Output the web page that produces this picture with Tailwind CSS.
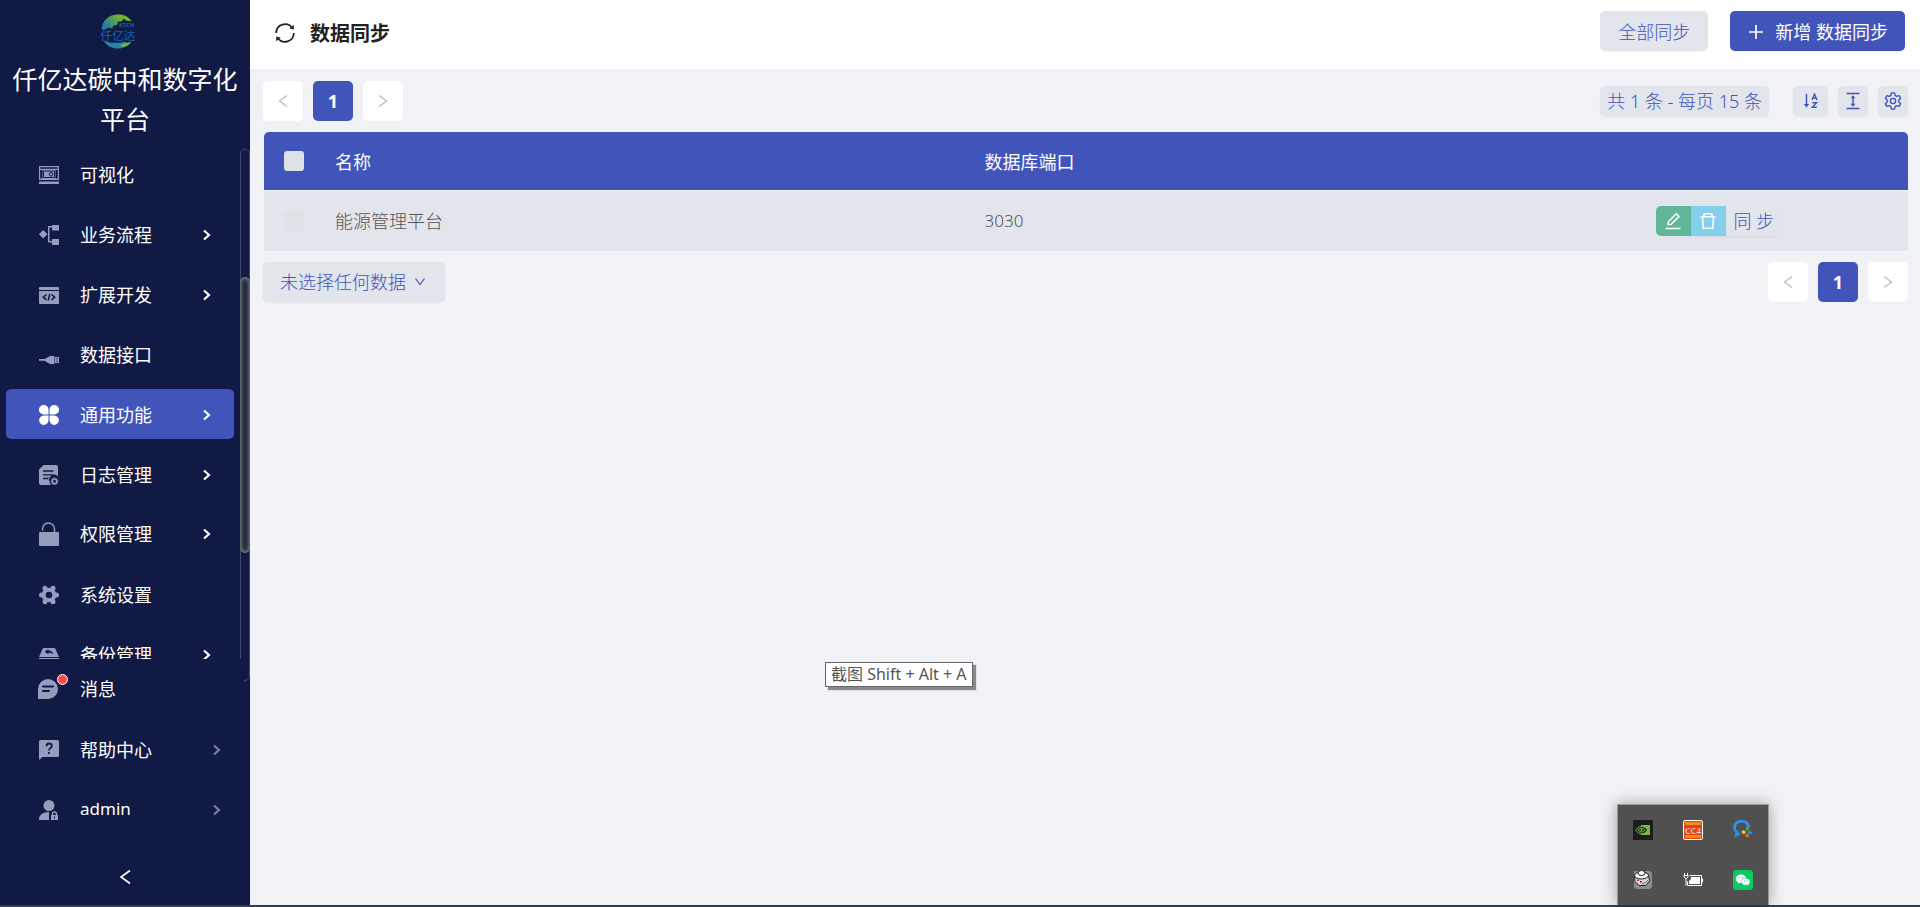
<!DOCTYPE html>
<html lang="zh-CN">
  <head>
    <meta charset="UTF-8" />
    <meta name="viewport" content="width=device-width, initial-scale=1.0" />
    <title>数据同步</title>
    <script src="https://cdn.jsdelivr.net/npm/@tailwindcss/browser@4"></script>
  </head>
  <body class="flex h-screen flex-col overflow-hidden bg-[#f0f2f6] font-['Noto_Sans','Noto_Sans_CJK_SC',sans-serif] text-lg">
    <div class="flex min-h-0 flex-1">
      <!-- sidebar -->
      <aside class="flex w-[250px] shrink-0 flex-col bg-[#111a44] text-white">
        <div class="flex flex-col items-center pt-3.5 pb-1">
          <svg viewBox="0 0 36 36" class="mr-3.5 h-[35px] w-9" role="img" aria-label="仟亿达">
            <defs>
              <linearGradient id="ring" x1="0" y1="0.6" x2="1" y2="0.2">
                <stop offset="0" stop-color="#1f7aa5" />
                <stop offset="0.6" stop-color="#6aae35" />
                <stop offset="1" stop-color="#7dbb2a" />
              </linearGradient>
            </defs>
            <path d="M1 16C2 6 9 .5 18 .5c6-.3 11 2.500 14 7l-5-.5-3-2-2 2.500-4 .5-1 3-4 1-1 3-4-1-3 2Z" fill="url(#ring)" />
            <path d="M3 27c4 2 10 3 16 2.500l6-1 3 1 4-1c-3 4-8 7-14 7-7 0-12-3-15-8.500Z" fill="#2583a6" />
            <path d="M20 32l6-2 5-1c-2 3-4 4-8 5Z" fill="#7dbb2a" />
            <text x="19" y="13" font-size="6" font-weight="700" fill="#1a5ea8">KTCN</text>
            <text x="0" y="27" font-size="12" font-weight="500" fill="#1558a6">仟亿达</text>
          </svg>
          <h1 class="mt-2.5 px-2 text-center text-[25px] leading-10">仟亿达碳中和数字化平台</h1>
        </div>

        <div class="relative mt-1.5 min-h-0 flex-1">
          <nav class="h-full space-y-2.5 overflow-hidden pr-4 pl-1.5">
            <a href="#" class="flex h-[50px] items-center rounded-[5px] pt-px pr-[22px] pl-[33px]">
              <svg viewBox="0 0 20 20" class="mr-[21px] h-5 w-5 text-[#959cbd]" fill="currentColor">
                <path fill-rule="evenodd" d="M0 1h20v14H0ZM1.200 2.200v1.600h17.600V2.200ZM1.200 5v8.500h2.300V5ZM16.500 5v8.500h2.300V5Z" />
                <path d="M4.500 6h11v6.500h-11Z" stroke="#111a44" />
                <circle cx="12" cy="9.300" r="1.800" fill="none" stroke="#111a44" />
                <path d="M0 16.500h20V19H0Z" />
              </svg>
              <span class="flex-1">可视化</span>
            </a>
            <a href="#" class="flex h-[50px] items-center rounded-[5px] pt-px pr-[22px] pl-[33px]">
              <svg viewBox="0 0 20 20" class="mr-[21px] h-5 w-5 text-[#959cbd]" fill="currentColor">
                <path d="M4.200 5 8.500 9.300l-4.300 4.200L0 9.300Z" />
                <path d="M9 1h4V0h7v5.500h-7V2.500h-2.500v13.500H13V14h7v6h-7v-2.500H9Z" />
              </svg>
              <span class="flex-1">业务流程</span>
              <svg viewBox="0 0 10 12" class="h-3 w-2.5" fill="none" stroke="currentColor" stroke-width="2.200"><path d="m2 1.500 5 4.500-5 4.500" /></svg>
            </a>
            <a href="#" class="flex h-[50px] items-center rounded-[5px] pt-px pr-[22px] pl-[33px]">
              <svg viewBox="0 0 20 20" class="mr-[21px] h-5 w-5 text-[#959cbd]" fill="currentColor">
                <path d="M1 2h18q1 0 1 1v2H0V3q0-1 1-1Z" />
                <path d="M0 6h20v12q0 1-1 1H1q-1 0-1-1Z" />
                <path d="M7.500 9.500 4.200 12.200l3.300 2.700M12.500 9.500l3.300 2.700-3.300 2.700M10.800 9l-1.600 6.500" fill="none" stroke="#111a44" stroke-width="1.500" />
              </svg>
              <span class="flex-1">扩展开发</span>
              <svg viewBox="0 0 10 12" class="h-3 w-2.5" fill="none" stroke="currentColor" stroke-width="2.200"><path d="m2 1.500 5 4.500-5 4.500" /></svg>
            </a>
            <a href="#" class="flex h-[50px] items-center rounded-[5px] pt-px pr-[22px] pl-[33px]">
              <svg viewBox="0 0 20 20" class="mr-[21px] h-5 w-5 text-[#959cbd]" fill="currentColor">
                <path d="M0 14h5.500l3-1.500 2.500-1.500h4.500v8H11l-2.500-1.500-3-1.700H0Z" />
                <path fill-rule="evenodd" d="M16 12h4v6h-4ZM17.200 13v1.200h1.300V13ZM17.200 15.800V17h1.300v-1.200Z" />
              </svg>
              <span class="flex-1">数据接口</span>
            </a>
            <a href="#" aria-current="page" class="flex h-[50px] items-center rounded-[5px] bg-[#4154b9] pt-px pr-[22px] pl-[33px]">
              <svg viewBox="0 0 20 20" class="mr-[21px] h-5 w-5" fill="currentColor">
                <path d="M4.700 0a4.700 4.700 0 0 1 4.800 4.700v4.800H4.700a4.700 4.700 0 0 1 0-9.500ZM15.300 0a4.700 4.700 0 0 1 0 9.500h-4.800V4.700A4.700 4.700 0 0 1 15.300 0ZM4.700 10.500h4.800v4.800a4.700 4.700 0 1 1-4.800-4.800ZM10.500 10.500h4.800a4.700 4.700 0 1 1-4.800 4.800Z" />
              </svg>
              <span class="flex-1">通用功能</span>
              <svg viewBox="0 0 10 12" class="h-3 w-2.5" fill="none" stroke="currentColor" stroke-width="2.200"><path d="m2 1.500 5 4.500-5 4.500" /></svg>
            </a>
            <a href="#" class="flex h-[50px] items-center rounded-[5px] pt-px pr-[22px] pl-[33px]">
              <svg viewBox="0 0 20 20" class="mr-[21px] h-5 w-5 text-[#959cbd]" fill="currentColor">
                <path d="M4.500 0H17q2 0 2 2v9.500a5 5 0 0 0-8.500 5 5 5 0 0 0 1.500 3.500H2q-2 0-2-2V4.500Z" />
                <path d="M4 6h10.500M4 9.800h10.500M4 13.500h5.500" stroke="#111a44" stroke-width="1.300" />
                <circle cx="15.500" cy="16.300" r="2.300" fill="none" stroke="currentColor" stroke-width="1.600" />
                <path d="M15.500 12.300v1.500M15.500 18.800v1.200M11.800 16.300h1.200M18 16.300h1.500M12.800 13.600l1 1M17.200 18l1 1M18.200 13.600l-1 1M13.800 18l-1 1" stroke="currentColor" stroke-width="1.300" />
              </svg>
              <span class="flex-1">日志管理</span>
              <svg viewBox="0 0 10 12" class="h-3 w-2.5" fill="none" stroke="currentColor" stroke-width="2.200"><path d="m2 1.500 5 4.500-5 4.500" /></svg>
            </a>
            <a href="#" class="flex h-[50px] items-center rounded-[5px] pr-[22px] pl-[33px]">
              <svg viewBox="0 0 20 24" class="mr-[21px] h-6 w-5 text-[#959cbd]" fill="currentColor">
                <rect y="10" width="20" height="14" rx="1" />
                <path d="M3.500 8.500V7a6 6 0 0 1 12 0v3" fill="none" stroke="currentColor" stroke-width="1.500" />
              </svg>
              <span class="flex-1">权限管理</span>
              <svg viewBox="0 0 10 12" class="h-3 w-2.5" fill="none" stroke="currentColor" stroke-width="2.200"><path d="m2 1.500 5 4.500-5 4.500" /></svg>
            </a>
            <a href="#" class="flex h-[50px] items-center rounded-[5px] pt-px pr-[22px] pl-[33px]">
              <svg viewBox="0 0 20 20" class="mr-[21px] h-5 w-5 text-[#959cbd]" fill="currentColor">
                <circle cx="10" cy="10" r="5.300" fill="none" stroke="currentColor" stroke-width="4" />
                <circle cx="2.500" cy="10" r="2.500" />
                <circle cx="17.500" cy="10" r="2.500" />
                <circle cx="6" cy="3.200" r="2.500" />
                <circle cx="14" cy="3.200" r="2.500" />
                <circle cx="6" cy="16.800" r="2.500" />
                <circle cx="14" cy="16.800" r="2.500" />
              </svg>
              <span class="flex-1">系统设置</span>
            </a>
            <a href="#" class="flex h-[50px] items-center rounded-[5px] pt-px pr-[22px] pl-[33px]">
              <svg viewBox="0 0 20 20" class="mr-[21px] h-5 w-5 text-[#959cbd]" fill="currentColor">
                <path d="M5 3h10q1 0 1.500 1L20 12H0l3.500-8Q4 3 5 3ZM0 13h20v5H0Z" />
                <path d="m9.500 4-4 2.800 4 2.500V7.700q3-.2 4.800 1.800-.8-4-4.800-4Z" fill="#111a44" />
              </svg>
              <span class="flex-1">备份管理</span>
              <svg viewBox="0 0 10 12" class="h-3 w-2.5" fill="none" stroke="currentColor" stroke-width="2.200"><path d="m2 1.500 5 4.500-5 4.500" /></svg>
            </a>
          </nav>
          <!-- scroll track, runs on behind the bottom menu -->
          <div class="absolute top-0 right-0 -bottom-[22px] w-2.5 rounded-[5px] border border-[#41486b]">
            <div class="absolute -inset-x-px top-[24%] h-[52%] rounded-[5px] bg-[#1e2538] shadow-[inset_0_0_4px_1px_#8f9098]"></div>
          </div>
        </div>

        <div class="relative pb-1">
          <div class="absolute inset-y-0 left-0 w-[244px] bg-[#111a44]"></div>
          <nav class="relative space-y-2.5 pt-[5px] pr-1.5 pl-1.5">
            <a href="#" class="flex h-[50px] items-center pr-[22px] pl-8">
              <span class="relative mr-[22px] h-5 w-5">
                <svg viewBox="0 0 20 20" class="h-5 w-5 text-[#959cbd]" fill="currentColor">
                  <path d="M10 0a10 10 0 0 1 0 20H0V10A10 10 0 0 1 10 0Z" />
                  <path d="M5 7.500h10M5 12h6" stroke="#111a44" stroke-width="2" stroke-linecap="round" />
                </svg>
                <span class="absolute -top-[5px] -right-2.5 h-[11px] w-[11px] rounded-full border border-white bg-[#ff4d4f]"></span>
              </span>
              <span class="flex-1">消息</span>
            </a>
            <a href="#" class="flex h-[50px] items-center pt-px pr-[22px] pl-[33px]">
              <svg viewBox="0 0 20 20" class="mr-[21px] h-5 w-5 text-[#959cbd]" fill="currentColor">
                <path d="M1.500 0h17Q20 0 20 1.500v14q0 1.500-1.500 1.500H3.500L0 20V1.500Q0 0 1.500 0Z" />
                <path d="M7.500 6.200q0-2.700 2.600-2.700 2.700 0 2.700 2.300 0 1.300-1.300 2.200Q10 9 10 10.500M10 12v2" fill="none" stroke="#111a44" stroke-width="1.800" />
              </svg>
              <span class="flex-1">帮助中心</span>
              <svg viewBox="0 0 10 12" class="h-3 w-2.5 text-[#7d829c]" fill="none" stroke="currentColor" stroke-width="2.200"><path d="m2 1.500 5 4.500-5 4.500" /></svg>
            </a>
            <a href="#" class="flex h-[50px] items-center pt-px pr-[22px] pl-[33px]">
              <svg viewBox="0 0 20 20" class="mr-[21px] h-5 w-5 text-[#959cbd]" fill="currentColor">
                <circle cx="10" cy="5.500" r="5.500" />
                <path d="M0 20q0-8 10-8v8ZM12 15h7v5h-7Z" />
                <path d="M13.500 15v-1a2 2 0 0 1 4 0v1" fill="none" stroke="currentColor" stroke-width="1.400" />
                <path d="M15.500 16.500v2" stroke="#111a44" />
              </svg>
              <span class="flex-1 text-[17px]">admin</span>
              <svg viewBox="0 0 10 12" class="h-3 w-2.5 text-[#7d829c]" fill="none" stroke="currentColor" stroke-width="2.200"><path d="m2 1.500 5 4.500-5 4.500" /></svg>
            </a>
          </nav>
          <button type="button" aria-label="收起菜单" class="relative mt-[19px] flex h-12 w-full items-center justify-center">
            <svg viewBox="0 0 12 16" class="h-4 w-3" fill="none" stroke="currentColor" stroke-width="1.600"><path d="M11 1.500 2 8l9 6.500" /></svg>
          </button>
        </div>
      </aside>

      <main class="min-w-0 flex-1">
        <header class="flex h-[69px] items-start bg-white pt-[11px] pr-[15px] pl-6">
          <div class="flex h-11 flex-1 items-center gap-3.5">
            <button type="button" aria-label="刷新">
              <svg viewBox="0 0 22 22" class="h-[22px] w-[22px] text-[#222]" fill="none" stroke="currentColor" stroke-width="1.700">
                <path d="M2.200 11a8.800 8.800 0 0 1 16-5M19.800 11a8.800 8.800 0 0 1-16 5" />
                <path d="m19.900 2.800-.2 4.700-4.400-1ZM2.100 19.200l.2-4.700 4.400 1Z" fill="currentColor" stroke="none" />
              </svg>
            </button>
            <h2 class="pt-0.5 text-xl font-bold text-[#222]">数据同步</h2>
          </div>
          <button type="button" class="h-10 rounded-[5px] bg-[#e2e5ec] px-[18px] pt-0.5 font-light text-[#4154b9] shadow-xs">全部同步</button>
          <button type="button" class="ml-[22px] flex h-10 items-center rounded-[5px] bg-[#4154b9] px-[17px] pt-0.5 text-white shadow-xs">
            <svg viewBox="0 0 18 18" class="mr-2.5 h-[18px] w-[18px]" stroke="currentColor" stroke-width="1.700"><path d="M9 2v14M2 9h14" /></svg>
            新增 数据同步
          </button>
        </header>

        <div class="pr-3 pl-[13px]">
          <div class="flex h-[63px] items-center justify-between">
            <div class="flex gap-2.5">
              <button type="button" aria-label="上一页" class="flex h-10 w-10 items-center justify-center rounded-[5px] bg-white text-[#bfbfbf]">
                <svg viewBox="0 0 10 14" class="h-3.5 w-2.5" fill="none" stroke="currentColor" stroke-width="1.500"><path d="M9 1.500 1.500 7 9 12.500" /></svg>
              </button>
              <button type="button" class="h-10 w-10 rounded-[5px] bg-[#4154b9] font-bold text-white">1</button>
              <button type="button" aria-label="下一页" class="flex h-10 w-10 items-center justify-center rounded-[5px] bg-white text-[#bfbfbf]">
                <svg viewBox="0 0 10 14" class="h-3.5 w-2.5" fill="none" stroke="currentColor" stroke-width="1.500"><path d="M1 1.500 8.500 7 1 12.500" /></svg>
              </button>
            </div>
            <div class="flex items-center gap-2.5 text-[#4154b9]">
              <button type="button" class="mr-3.5 h-[30px] rounded-[5px] bg-[#e2e5ec] px-[7px] font-light leading-[30px] shadow-xs">共 1 条 - 每页 15 条</button>
              <button type="button" aria-label="排序" class="flex h-[30px] w-[35px] items-center justify-center rounded-[5px] bg-[#e2e5ec] shadow-xs">
                <svg viewBox="0 0 16 16" class="h-4 w-4" fill="none" stroke="currentColor" stroke-width="1.400">
                  <path d="M3.500 1v12" />
                  <path d="M.8 11h5.400l-2.700 3.500Z" fill="currentColor" stroke="none" />
                  <path d="m9 7 2.500-6L14 7M9.800 5h3.400M9.300 9.700h4.200L9.300 14.300h4.500" />
                </svg>
              </button>
              <button type="button" aria-label="行高" class="flex h-[30px] w-[30px] items-center justify-center rounded-[5px] bg-[#e2e5ec] shadow-xs">
                <svg viewBox="0 0 16 18" class="h-[18px] w-4" fill="none" stroke="currentColor" stroke-width="1.400">
                  <path d="M1.500 1.500h13M1.500 16.500h13M8 4v10" />
                  <path d="m5.500 6.200 2.500-3 2.500 3ZM5.500 11.800l2.500 3 2.500-3Z" fill="currentColor" stroke="none" />
                </svg>
              </button>
              <button type="button" aria-label="设置" class="flex h-[30px] w-[30px] items-center justify-center rounded-[5px] bg-[#e2e5ec] shadow-xs">
                <svg viewBox="0 0 18 18" class="h-[18px] w-[18px]" fill="none" stroke="currentColor" stroke-width="1.400" stroke-linejoin="round">
                  <path d="M7.500.9h3l.6 2.500 1.600 1 2.400-.8 1.500 2.600-1.800 1.800v2l1.800 1.800-1.500 2.600-2.400-.8-1.600 1-.6 2.500h-3l-.6-2.500-1.600-1-2.400.8-1.500-2.600L3.200 10V8L1.400 6.200l1.500-2.600 2.400.8 1.600-1Z" />
                  <circle cx="9" cy="9" r="2.600" />
                </svg>
              </button>
            </div>
          </div>

          <div class="ml-px overflow-hidden rounded-t-[5px]">
            <table class="w-full table-fixed border-separate border-spacing-0 text-left">
              <colgroup>
                <col class="w-[61px]" />
                <col class="w-[40%]" />
                <col />
                <col class="w-[23%]" />
              </colgroup>
              <thead class="bg-[#4154b9] text-white">
                <tr class="h-[58px]">
                  <th class="pl-5">
                    <input type="checkbox" aria-label="全选" class="block h-5 w-5 appearance-none rounded-[3px] bg-[#dde2e6]" />
                  </th>
                  <th class="pt-px pl-2.5 font-normal">名称</th>
                  <th class="pt-px pl-0.5 font-normal">数据库端口</th>
                  <th></th>
                </tr>
              </thead>
              <tbody class="bg-[#e2e5ec] font-light text-[#555]">
                <tr class="h-[61px]">
                  <td class="border-t border-[#f5f6f9] pl-5">
                    <input type="checkbox" aria-label="选择 能源管理平台" class="block h-5 w-5 appearance-none rounded-[3px] bg-[#dde2e6]" />
                  </td>
                  <td class="border-t border-[#f5f6f9] pl-2.5">能源管理平台</td>
                  <td class="border-t border-[#f5f6f9] pl-0.5 text-[17px]">3030</td>
                  <td class="border-t border-[#f5f6f9]">
                    <div class="flex justify-center">
                      <button type="button" aria-label="编辑" class="flex h-[30px] w-[35px] items-center justify-center rounded-l-[5px] bg-[#60b698] text-white">
                        <svg viewBox="0 0 18 18" class="h-[18px] w-[18px]" fill="none" stroke="currentColor" stroke-width="1.500">
                          <path d="M1.500 16.500h15M4 12.700l.5-3.200 7.800-7.800 2.700 2.700-7.800 7.800Z" />
                        </svg>
                      </button>
                      <button type="button" aria-label="删除" class="flex h-[30px] w-[35px] items-center justify-center bg-[#84cfe9] text-white shadow-xs">
                        <svg viewBox="0 0 18 18" class="h-[18px] w-[18px]" fill="none" stroke="currentColor" stroke-width="1.500">
                          <path d="M1.500 4.700h15M5 4.500V1.700h8v2.800M3.500 5l.7 11.300h9.600L14.500 5" />
                        </svg>
                      </button>
                      <button type="button" class="h-[30px] rounded-r-[5px] px-2 leading-[30px] text-[#4154b9] shadow-xs">同 步</button>
                    </div>
                  </td>
                </tr>
              </tbody>
            </table>
          </div>

          <div class="mt-[11px] flex items-center justify-between">
            <div class="relative">
              <label for="bulk" class="sr-only">批量操作</label>
              <select id="bulk" class="h-10 w-[182px] appearance-none rounded-[5px] bg-[#e2e5ec] pl-[17px] font-light leading-10 text-[#4154b9] shadow-xs">
                <option>未选择任何数据</option>
              </select>
              <svg viewBox="0 0 12 10" class="pointer-events-none absolute top-[15px] right-[19px] h-2.5 w-3 text-[#4154b9]" fill="none" stroke="currentColor" stroke-width="1.200"><path d="m1.500 1.500 4.500 6 4.500-6" /></svg>
            </div>
            <div class="flex gap-2.5">
              <button type="button" aria-label="上一页" class="flex h-10 w-10 items-center justify-center rounded-[5px] bg-white text-[#bfbfbf]">
                <svg viewBox="0 0 10 14" class="h-3.5 w-2.5" fill="none" stroke="currentColor" stroke-width="1.500"><path d="M9 1.500 1.500 7 9 12.500" /></svg>
              </button>
              <button type="button" class="h-10 w-10 rounded-[5px] bg-[#4154b9] font-bold text-white">1</button>
              <button type="button" aria-label="下一页" class="flex h-10 w-10 items-center justify-center rounded-[5px] bg-white text-[#bfbfbf]">
                <svg viewBox="0 0 10 14" class="h-3.5 w-2.5" fill="none" stroke="currentColor" stroke-width="1.500"><path d="M1 1.500 8.500 7 1 12.500" /></svg>
              </button>
            </div>
          </div>
        </div>
      </main>
    </div>
    <div class="h-0.5 shrink-0 bg-[#344046]"></div>

    <!-- tooltip of the screenshot tool -->
    <div role="tooltip" class="absolute top-[662px] left-[825px] border border-[#666] bg-white px-[5px] text-base leading-[23px] text-[#555] shadow-[3px_3px_1px_#8a8a8e]">截图 Shift + Alt + A</div>

    <!-- system tray -->
    <div class="absolute right-[151px] bottom-0.5 grid h-[101px] w-[152px] grid-cols-[50px_50px_50px] content-start gap-y-[30px] border border-b-0 border-[#999] bg-[#505050] pt-[15px] shadow-[0_0_14px_rgba(0,0,0,0.35)]">
      <svg viewBox="0 0 20 20" class="mx-auto h-5 w-5">
        <path d="M0 0h20v20H0Z" fill="#1c1c1c" />
        <path d="M8 5h9v10H8Z" fill="#76b843" />
        <path d="M2.500 10Q6 5.500 10 6.500q3 .8 4.500 3.500-2 3.500-5.500 4-4 0-6.500-4Z" fill="#1c1c1c" stroke="#76b843" />
        <path d="M5 10q2.500-2.500 5-1.500l2 1.500q-1.500 2-3.500 2-2 0-3.500-2Z" fill="none" stroke="#76b843" />
        <circle cx="8.500" cy="10" r="1" fill="#76b843" />
      </svg>
      <svg viewBox="0 0 20 20" class="mx-auto h-5 w-5">
        <rect x=".5" y=".5" width="19" height="19" rx="1.500" fill="#e8400f" stroke="#fff" />
        <path d="M2 2h16v3H2ZM2 15h16v3H2Z" fill="#f58a1c" />
        <text x="10" y="13.500" text-anchor="middle" font-size="9" font-weight="700" fill="#fff" stroke="#b01818" stroke-width=".4">CC4</text>
      </svg>
      <svg viewBox="0 0 20 20" class="mx-auto h-5 w-5">
        <path d="M15.500 8A7 6.500 0 1 0 4 12.500L3.500 15l3-1.500" fill="none" stroke="#2f8df0" stroke-width="2.800" />
        <path d="m13.500 6 2.500 2-1 3-2.500-1Z" fill="#35b82a" />
        <path d="m20 12-2.500 2.500-3-1.500 1-2Z" fill="#2f8df0" />
        <path d="m14 18-2-2.500 2-2 2.500 2Z" fill="#f26b22" />
        <path d="m8 12 2.500-2 2.500 2-2 2.500Z" fill="#f8c81c" />
      </svg>
      <svg viewBox="0 0 20 20" class="mx-auto h-5 w-5">
        <path d="M1 1h16l2 2v14l-2 2H3l-2-2Z" fill="#8c8c90" />
        <path d="M1.500 5h14l1 6-4 4.500H6l-4-4Z" fill="#d7d7da" stroke="#222" />
        <ellipse cx="8.500" cy="5.500" rx="7" ry="3.500" fill="#eee" stroke="#222" />
        <ellipse cx="8.500" cy="3" rx="3.500" ry="2.500" fill="#fff" stroke="#222" />
        <path d="M4 9.500h2V11H4Z" fill="#d22" />
        <path d="M7 11h2v1.500H7Z" fill="#33c" />
        <path d="M9 14q4-1 6-4" fill="none" stroke="#666" />
      </svg>
      <svg viewBox="0 0 20 20" class="mx-auto h-5 w-5" fill="none" stroke="#fff">
        <path d="M6.500 5.500h12v10h-14v-4" />
        <path d="M8 7h9v7H6v-3l2-2ZM19 8.500h1v4h-1Z" fill="#fff" stroke="none" />
        <path d="M1 5.500h4v1.500L3 9 1 7Z" />
        <path d="M1.500 3v2M4.500 3v2M3 9v6.500" />
      </svg>
      <svg viewBox="0 0 20 20" class="mx-auto h-5 w-5">
        <rect width="20" height="20" rx="3.500" fill="#0cca63" />
        <path d="M8 4.500c3 0 5.200 1.800 5.200 4.200S11 13 8 13l-1.500-.2-2 1 .5-1.700C3.600 11.300 2.800 10 2.800 8.700 2.800 6.300 5 4.500 8 4.500Z" fill="#fff" />
        <path d="M12.600 8.300c2.600 0 4.500 1.500 4.500 3.500 0 1.100-.6 2-1.600 2.700l.4 1.300-1.600-.8-1.700.3c-2.600 0-4.500-1.500-4.500-3.500s1.900-3.500 4.500-3.500Z" fill="#fff" stroke="#0cca63" stroke-width=".6" />
        <path d="M5.800 7h1v1h-1ZM9.200 7h1v1h-1ZM10.800 10.300h1v1h-1ZM13.600 10.300h1v1h-1Z" fill="#0cca63" />
      </svg>
    </div>
  </body>
</html>
